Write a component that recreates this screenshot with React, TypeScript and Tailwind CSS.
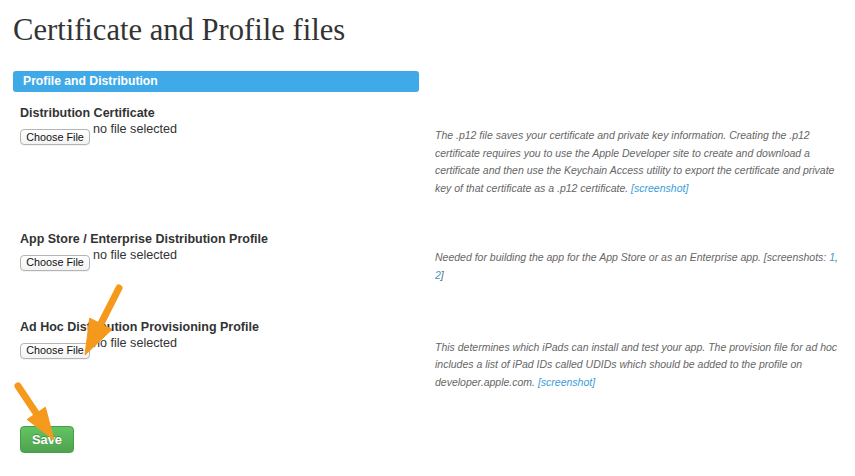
import React from "react";

type Pt = [number, number];

function Arrow({ tail, tip, L = 33, H = 12.5 }: { tail: Pt; tip: Pt; L?: number; H?: number }) {
  const dx = tip[0] - tail[0];
  const dy = tip[1] - tail[1];
  const len = Math.hypot(dx, dy);
  const ux = dx / len;
  const uy = dy / len;
  const bx = tip[0] - ux * L;
  const by = tip[1] - uy * L;
  const px = -uy;
  const py = ux;
  const pts = `${bx + px * H},${by + py * H} ${tip[0]},${tip[1]} ${bx - px * H},${by - py * H}`;
  return (
    <g fill="#f5991c" stroke="#f5991c">
      <line x1={tail[0]} y1={tail[1]} x2={bx + ux * 2} y2={by + uy * 2} strokeWidth={7} strokeLinecap="round" />
      <polygon points={pts} strokeWidth={1} strokeLinejoin="round" />
    </g>
  );
}

function FileInput() {
  return (
    <div className="flex items-start h-[16px]">
      <div className="mt-[8px] h-[16px] w-[70px] flex items-center justify-center rounded-[4px] border border-[#b4b4b4] bg-gradient-to-b from-white to-[#f3f3f3] text-[10.8px] leading-none text-[#111] shadow-[0_1px_0_rgba(0,0,0,0.05)]">
        Choose File
      </div>
      <span className="ml-[3px] text-[12.6px] leading-[16px] text-[#333]">no file selected</span>
    </div>
  );
}

const Link = ({ children }: { children: React.ReactNode }) => (
  <span className="text-[#3b9ad9]">{children}</span>
);

function Section({
  label,
  descPt,
  mb,
  lines,
}: {
  label: string;
  descPt: string;
  mb: string;
  lines: React.ReactNode[];
}) {
  return (
    <div className={`flex pl-[7px] ${mb}`}>
      <div className="w-[415px] shrink-0">
        <div className="text-[12.5px] leading-[16px] font-bold text-[#333]">{label}</div>
        <FileInput />
      </div>
      <div className={`${descPt} italic text-[10.5px] leading-[17.7px] text-[#666] whitespace-nowrap`}>
        {lines.map((l, i) => (
          <div key={i}>{l}</div>
        ))}
      </div>
    </div>
  );
}

export default function App() {
  return (
    <div
      className="relative w-[855px] h-[476px] overflow-hidden bg-white pl-[13px]"
      style={{ fontFamily: '"Liberation Sans", Arial, sans-serif' }}
    >
      <h1
        className="mt-[12px] h-[36px] text-[30.6px] leading-[36px] text-[#333]"
        style={{ fontFamily: '"Liberation Serif", "Times New Roman", serif' }}
      >
        Certificate and Profile files
      </h1>
      <div className="mt-[23px] w-[406px] h-[21px] rounded-[3px] bg-[#40a9e7] px-[10px] text-[12.2px] leading-[21px] font-bold text-white">
        Profile and Distribution
      </div>
      <div className="mt-[13px]">
        <Section
          label="Distribution Certificate"
          descPt="pt-[22px]"
          mb="mb-[33px]"
          lines={[
            "The .p12 file saves your certificate and private key information. Creating the .p12",
            "certificate requires you to use the Apple Developer site to create and download a",
            "certificate and then use the Keychain Access utility to export the certificate and private",
            <>
              key of that certificate as a .p12 certificate. <Link>[screenshot]</Link>
            </>,
          ]}
        />
        <Section
          label="App Store / Enterprise Distribution Profile"
          descPt="pt-[18.5px]"
          mb="mb-[34px]"
          lines={[
            <>
              Needed for building the app for the App Store or as an Enterprise app. [screenshots: <Link>1</Link>,
            </>,
            <>
              <Link>2</Link>]
            </>,
          ]}
        />
        <Section
          label="Ad Hoc Distribution Provisioning Profile"
          descPt="pt-[20px]"
          mb="mb-[34px]"
          lines={[
            "This determines which iPads can install and test your app. The provision file for ad hoc",
            "includes a list of iPad IDs called UDIDs which should be added to the profile on",
            <>
              developer.apple.com. <Link>[screenshot]</Link>
            </>,
          ]}
        />
      </div>
      <div className="ml-[7px] w-[54px] h-[27px] rounded-[4px] border border-[#45a045] bg-gradient-to-b from-[#63c463] to-[#4fa34f] flex items-center justify-center text-[12.8px] font-bold text-white [text-shadow:0_-1px_0_rgba(0,0,0,0.25)]">
        Save
      </div>
      <svg className="absolute left-0 top-0 pointer-events-none" width={855} height={476}>
        <Arrow tail={[119, 288]} tip={[85, 355]} L={35} H={12.5} />
        <Arrow tail={[18, 386]} tip={[54, 440]} L={32} H={11} />
      </svg>
    </div>
  );
}
